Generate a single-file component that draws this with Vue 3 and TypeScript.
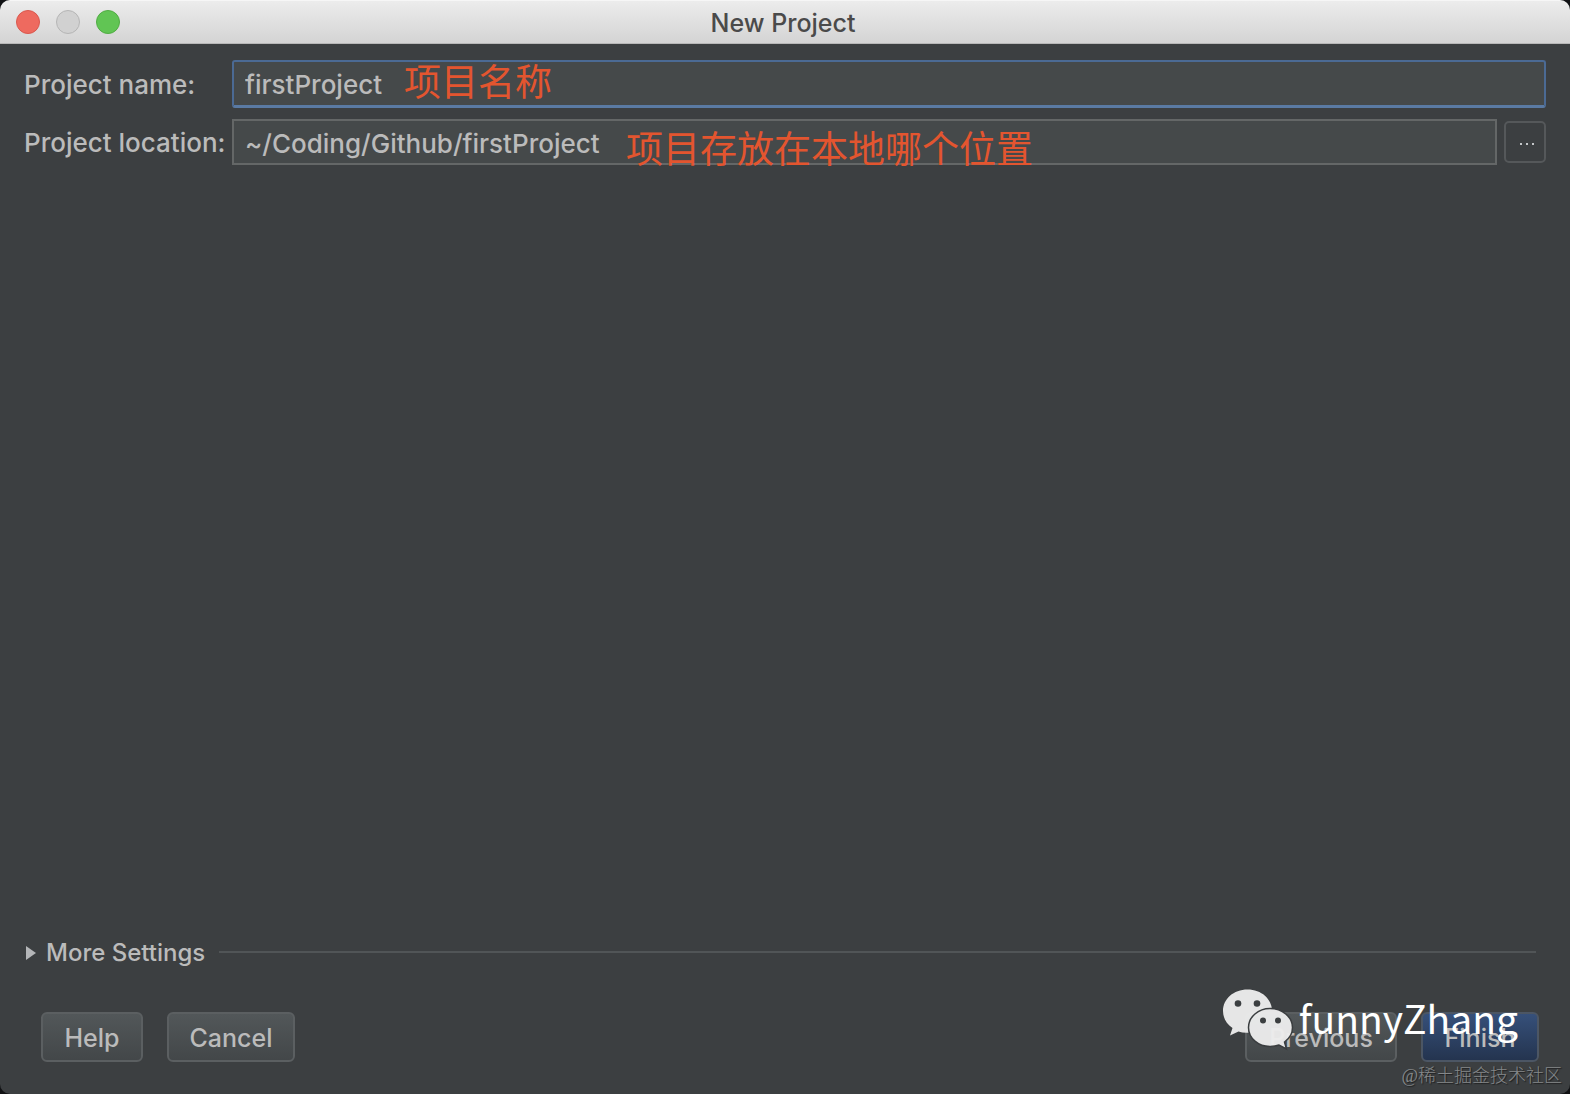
<script setup lang="ts">
import { ref } from 'vue'

const projectName = ref('firstProject')
const projectLocation = ref('~/Coding/Github/firstProject')
</script>

<template>
  <main class="window">
    <header class="titlebar">
      <div class="lights">
        <button class="light close" type="button" aria-label="Close"></button>
        <button class="light minimize" type="button" aria-label="Minimize" disabled></button>
        <button class="light zoom" type="button" aria-label="Zoom"></button>
      </div>
      <h1 class="title">New Project</h1>
    </header>

    <form class="content" @submit.prevent>
      <div class="row">
        <label class="label" for="project-name">Project name:</label>
        <div class="field">
          <input id="project-name" v-model="projectName" class="input active" type="text" />
          <span class="note note-name">项目名称</span>
        </div>
      </div>
      <div class="row">
        <label class="label" for="project-location">Project location:</label>
        <div class="field">
          <input id="project-location" v-model="projectLocation" class="input" type="text" />
          <span class="note note-location">项目存放在本地哪个位置</span>
        </div>
        <button class="browse" type="button" aria-label="Browse">
          <svg width="16" height="4" viewBox="0 0 16 4" aria-hidden="true">
            <path d="M1 1h2v2H1zM7 1h2v2H7zM13 1h2v2h-2z" fill="#c4c7c9" />
          </svg>
        </button>
      </div>

      <div class="spacer"></div>

      <div class="more">
        <button class="more-toggle" type="button" aria-expanded="false">
          <svg width="10" height="14" viewBox="0 0 10 14" aria-hidden="true">
            <path d="M0 0L10 7L0 14z" fill="#b4b6b8" />
          </svg>
          More Settings
        </button>
        <span class="rule"></span>
      </div>

      <footer class="actions">
        <button class="btn help" type="button">Help</button>
        <button class="btn cancel" type="button">Cancel</button>
        <div class="spacer"></div>
        <button class="btn previous" type="button">Previous</button>
        <button class="btn finish" type="submit">Finish</button>
      </footer>
    </form>

    <div class="brand">
      <svg class="brand-icon" width="72" height="62" viewBox="0 0 72 62" aria-hidden="true">
        <path
          d="M25.500 0.500C11.500 0.500 1 10 1 22C1 29 4.500 35 10.500 39L8 46.500L16.500 42.500C20 43.700 24 44 28 43.500C39 41 50 34 50 22C50 10 39.500 0.500 25.500 0.500Z"
          fill="#ededed"
        />
        <path
          d="M48 19.500C36.500 19.500 26.500 27.800 26.500 38.500C26.500 49.500 36.500 57.500 48 57.500C51.500 57.500 54.500 57 57 56L64.500 60L62.500 53C67.500 49.500 70.500 44.500 70.500 38.500C70.500 27.800 60 19.500 48 19.500Z"
          fill="#ededed"
          stroke="#3a3d3f"
          stroke-width="1.500"
        />
        <circle cx="16" cy="14.500" r="3.300" fill="#3c3f41" />
        <circle cx="35" cy="14.500" r="3.300" fill="#3c3f41" />
        <circle cx="41" cy="31.500" r="3" fill="#3c3f41" />
        <circle cx="56" cy="31.500" r="3" fill="#3c3f41" />
      </svg>
      <span class="brand-name">funnyZhang</span>
    </div>
    <span class="community">@稀土掘金技术社区</span>
  </main>
</template>

<style>
body {
  margin: 0;
  background: #111214;
}
</style>

<style scoped>
.window {
  position: relative;
  display: flex;
  flex-direction: column;
  min-height: 100vh;
  box-sizing: border-box;
  overflow: hidden;
  border-radius: 10px;
  background: #3c3f41;
  color: #bbbbbb;
  font-family: Inter, "Liberation Sans", "Noto Sans CJK SC", sans-serif;
  font-size: 26px;
  font-weight: 450;
  line-height: 32px;
}
.titlebar {
  display: grid;
  grid-template-columns: 1fr auto 1fr;
  align-items: center;
  height: 44px;
  padding: 0 20px 0 16px;
  box-sizing: border-box;
  background: linear-gradient(#ececec, #d4d4d4);
  border-top: 1px solid #f6f6f6;
  border-bottom: 1px solid #b8b8b8;
}
.lights {
  display: flex;
  gap: 16px;
}
.light {
  width: 24px;
  height: 24px;
  padding: 0;
  border: 1px solid;
  border-radius: 50%;
}
.close {
  background: #ee6a5f;
  border-color: #d9584e;
}
.minimize {
  background: #d1d1d1;
  border-color: #b5b5b5;
}
.zoom {
  background: #61c554;
  border-color: #51ac44;
}
.title {
  margin: 0;
  padding-top: 2px;
  color: #4a4a4a;
  font-size: 25px;
  font-weight: 450;
  line-height: 32px;
}
.content {
  flex: 1;
  display: flex;
  flex-direction: column;
  padding: 16px 24px 32px;
}
.row {
  display: flex;
  align-items: center;
  margin-bottom: 11px;
}
.label {
  flex: 0 0 208px;
  padding-top: 2px;
  white-space: nowrap;
}
.field {
  position: relative;
  flex: 1;
  display: flex;
}
.input {
  flex: 1;
  min-width: 0;
  height: 46px;
  padding: 2px 11px 0;
  box-sizing: border-box;
  border: 2px solid #646767;
  outline: none;
  background: #45494a;
  color: #bbbbbb;
  font: inherit;
}
.input.active {
  height: 48px;
  border-color: #4b6a94;
  border-bottom: 3px solid #5a7aa3;
  border-radius: 3px;
}
.note {
  position: absolute;
  color: #e3552f;
  font-family: "Noto Sans CJK SC", sans-serif;
  font-size: 37px;
  font-weight: 400;
  line-height: 40px;
  white-space: nowrap;
  pointer-events: none;
}
.note-name {
  left: 172px;
  top: 0;
}
.note-location {
  left: 394px;
  top: 8px;
}
.browse {
  display: flex;
  align-items: center;
  justify-content: center;
  width: 42px;
  height: 42px;
  margin-left: 7px;
  padding: 4px 0 0 4px;
  border: 2px solid #55585a;
  border-radius: 5px;
  background: #3c3f41;
}
.spacer {
  flex: 1;
}
.more {
  display: flex;
  align-items: center;
  gap: 14px;
  padding: 0 10px 0 2px;
  margin-bottom: 43px;
}
.more-toggle {
  display: flex;
  align-items: center;
  gap: 10px;
  padding: 2px 0 0;
  border: 0;
  background: none;
  color: inherit;
  font: inherit;
  font-size: 24px;
}
.rule {
  flex: 1;
  height: 2px;
  background: #515557;
}
.actions {
  display: flex;
  gap: 24px;
  padding: 0 7px 0 17px;
}
.btn {
  height: 50px;
  padding: 1px 0 0;
  border: 2px solid #5b5f61;
  border-radius: 6px;
  background: linear-gradient(#525759, #434749);
  color: #bbbbbb;
  font: inherit;
  font-size: 25px;
}
.help {
  width: 102px;
}
.cancel {
  width: 128px;
}
.previous {
  width: 152px;
}
.finish {
  width: 118px;
  background: linear-gradient(#36507a, #24344f);
  border-color: #4c5664;
}
.brand {
  position: absolute;
  right: 52px;
  bottom: 43px;
  display: flex;
  align-items: flex-start;
  gap: 5px;
  pointer-events: none;
}
.brand-icon {
  opacity: 0.96;
}
.brand-name {
  color: #ffffff;
  font-family: "Noto Sans CJK SC", sans-serif;
  font-size: 39px;
  font-weight: 400;
  line-height: 56px;
}
.community {
  position: absolute;
  right: 8px;
  bottom: 6px;
  color: #85888a;
  font-family: "Liberation Serif", "Noto Sans CJK SC", serif;
  font-size: 18px;
  font-weight: 300;
  line-height: 24px;
  text-shadow: 1px 1px 1px #1c1d1e;
  pointer-events: none;
}
</style>
